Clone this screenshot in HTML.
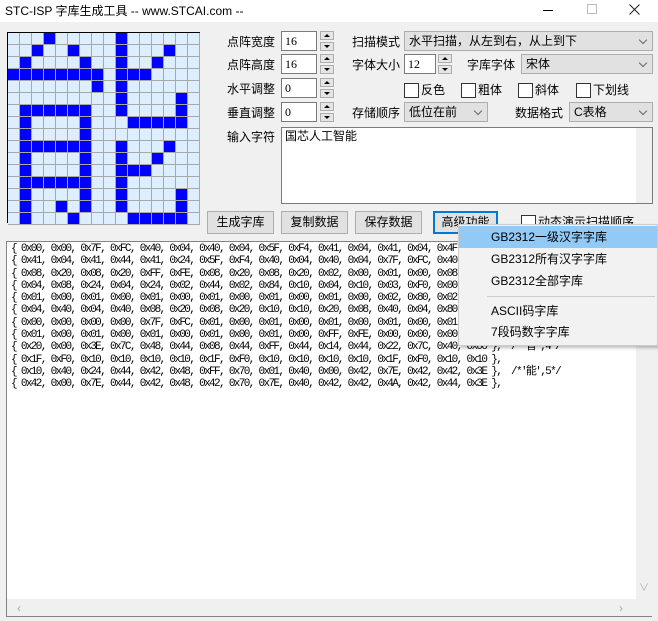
<!DOCTYPE html>
<html><head><meta charset="utf-8"><style>
*{box-sizing:border-box;margin:0;padding:0}
body{width:658px;height:621px;background:#f0f0f0;position:relative;overflow:hidden;font-family:"Liberation Sans","Noto Sans CJK SC",sans-serif;font-size:12px;color:#000}
.a{position:absolute}
.lbl{position:absolute;font-size:12px;line-height:14px;white-space:nowrap}
.inp{position:absolute;background:#fff;border:1px solid #7a7a7a;font-family:"Liberation Serif","Noto Serif CJK SC",serif;font-size:12px;padding:2px 3px;height:20px}
.spin{position:absolute;width:14px;height:20px}
.spin div{height:9px;border:1px solid #adadad;background:#e5e5e5;margin-bottom:2px;position:relative}
.spin div:after{content:"";position:absolute;left:3px;border-left:3px solid transparent;border-right:3px solid transparent}
.spin .u:after{top:2px;border-bottom:3px solid #000}
.spin .d:after{top:2px;border-top:3px solid #000}
.sel{position:absolute;height:20px;background:#e1e1e1;border:1px solid #adadad;padding:2px 4px;font-size:12px;line-height:14px;white-space:nowrap}
.sel:after{content:"";position:absolute;right:6px;top:5px;width:5px;height:5px;border-right:1px solid #666;border-bottom:1px solid #666;transform:rotate(45deg)}
.cb{position:absolute;font-size:12px;line-height:14px;white-space:nowrap;padding-left:17px}
.cb:before{content:"";position:absolute;left:0;top:0;width:13px;height:13px;border:1px solid #333;background:#fff}
.btn{position:absolute;height:23px;background:#e1e1e1;border:1px solid #adadad;text-align:center;line-height:21px;font-size:12px}
#grid{position:absolute;left:7px;top:32px;width:193px;height:191px;border:1px solid #000;background:#d4e8fb;display:grid;grid-template-columns:repeat(16,12px);grid-template-rows:repeat(16,12px);gap:0}
#grid div{border-right:1px solid #a8a8a8;border-bottom:1px solid #a8a8a8;background:#ddeeff}
#grid div.on{background:#0000ff}
#code{position:absolute;left:6px;top:241px;width:646px;height:376px;border:1px solid #828282;background:#fff}
pre{position:absolute;left:4px;top:1px;font-family:"Liberation Mono",monospace;font-size:11px;letter-spacing:-1.65px;line-height:12.3px;color:#000}
.menu{position:absolute;left:458px;top:224px;width:200px;height:122px;background:#f2f2f2;border:1px solid #ccc;box-shadow:2px 2px 3px rgba(0,0,0,.25)}
.mi{position:absolute;left:0;width:198px;height:22px;line-height:22px;padding-left:32px;font-size:12px;color:#000}
</style></head><body>
<div class="a" style="left:0;top:0;width:658px;height:22px;background:#fff"></div>
<div class="lbl" style="left:5px;top:3px;font-size:12px;line-height:16px">STC-ISP 字库生成工具 -- www.STCAI.com --</div>
<div class="a" style="left:543px;top:10px;width:10px;height:1px;background:#000"></div>
<div class="a" style="left:587px;top:4px;width:10px;height:10px;border:1px solid #bbb"></div>
<svg class="a" style="left:629px;top:4px" width="11" height="11"><path d="M0.5 0.5L10.5 10.5M10.5 0.5L0.5 10.5" stroke="#222" stroke-width="1"/></svg>

<div id="grid"></div>

<div class="lbl" style="left:227px;top:35px">点阵宽度</div>
<div class="inp" style="left:281px;top:31px;width:36px">16</div>
<div class="spin" style="left:320px;top:31px"><div class="u"></div><div class="d"></div></div>
<div class="lbl" style="left:227px;top:58px">点阵高度</div>
<div class="inp" style="left:281px;top:54px;width:36px">16</div>
<div class="spin" style="left:320px;top:54px"><div class="u"></div><div class="d"></div></div>
<div class="lbl" style="left:227px;top:82px">水平调整</div>
<div class="inp" style="left:281px;top:78px;width:36px">0</div>
<div class="spin" style="left:320px;top:78px"><div class="u"></div><div class="d"></div></div>
<div class="lbl" style="left:227px;top:106px">垂直调整</div>
<div class="inp" style="left:281px;top:102px;width:36px">0</div>
<div class="spin" style="left:320px;top:102px"><div class="u"></div><div class="d"></div></div>

<div class="lbl" style="left:352px;top:35px">扫描模式</div>
<div class="sel" style="left:404px;top:31px;width:249px">水平扫描，从左到右，从上到下</div>
<div class="lbl" style="left:352px;top:58px">字体大小</div>
<div class="inp" style="left:404px;top:54px;width:32px">12</div>
<div class="spin" style="left:438px;top:54px"><div class="u"></div><div class="d"></div></div>
<div class="lbl" style="left:467px;top:58px">字库字体</div>
<div class="sel" style="left:521px;top:54px;width:132px">宋体</div>
<div class="cb" style="left:404px;top:83px">反色</div>
<div class="cb" style="left:461px;top:83px">粗体</div>
<div class="cb" style="left:518px;top:83px">斜体</div>
<div class="cb" style="left:576px;top:83px">下划线</div>
<div class="lbl" style="left:352px;top:106px">存储顺序</div>
<div class="sel" style="left:404px;top:102px;width:84px">低位在前</div>
<div class="lbl" style="left:515px;top:106px">数据格式</div>
<div class="sel" style="left:569px;top:102px;width:84px">C表格</div>
<div class="lbl" style="left:227px;top:130px">输入字符</div>
<div class="a" style="left:281px;top:127px;width:372px;height:77px;background:#fff;border:1px solid #7a7a7a"></div>
<div class="lbl" style="left:285px;top:129px">国芯人工智能</div>
<div class="a" style="left:636px;top:128px;width:16px;height:75px;background:#f0f0f0"></div>

<div class="btn" style="left:207px;top:211px;width:67px">生成字库</div>
<div class="btn" style="left:281px;top:211px;width:67px">复制数据</div>
<div class="btn" style="left:355px;top:211px;width:67px">保存数据</div>
<div class="btn" style="left:433px;top:211px;width:65px;border:2px solid #0078d7;line-height:19px">高级功能</div>
<div class="cb" style="left:521px;top:215px">动态演示扫描顺序</div>

<div id="code">
<pre>{ 0x00, 0x00, 0x7F, 0xFC, 0x40, 0x04, 0x40, 0x04, 0x5F, 0xF4, 0x41, 0x04, 0x41, 0x04, 0x4F, 0xE4 },
{ 0x41, 0x04, 0x41, 0x44, 0x41, 0x24, 0x5F, 0xF4, 0x40, 0x04, 0x40, 0x04, 0x7F, 0xFC, 0x40, 0x04 },
{ 0x08, 0x20, 0x08, 0x20, 0xFF, 0xFE, 0x08, 0x20, 0x08, 0x20, 0x02, 0x00, 0x01, 0x00, 0x08, 0x88 },
{ 0x04, 0x08, 0x24, 0x04, 0x24, 0x02, 0x44, 0x02, 0x84, 0x10, 0x04, 0x10, 0x03, 0xF0, 0x00, 0x00 },
{ 0x01, 0x00, 0x01, 0x00, 0x01, 0x00, 0x01, 0x00, 0x01, 0x00, 0x01, 0x00, 0x02, 0x80, 0x02, 0x80 },
{ 0x04, 0x40, 0x04, 0x40, 0x08, 0x20, 0x08, 0x20, 0x10, 0x10, 0x20, 0x08, 0x40, 0x04, 0x80, 0x02 },
{ 0x00, 0x00, 0x00, 0x00, 0x7F, 0xFC, 0x01, 0x00, 0x01, 0x00, 0x01, 0x00, 0x01, 0x00, 0x01, 0x00 },
{ 0x01, 0x00, 0x01, 0x00, 0x01, 0x00, 0x01, 0x00, 0x01, 0x00, 0xFF, 0xFE, 0x00, 0x00, 0x00, 0x00 },
{ 0x20, 0x00, 0x3E, 0x7C, 0x48, 0x44, 0x08, 0x44, 0xFF, 0x44, 0x14, 0x44, 0x22, 0x7C, 0x40, 0x00 },  /*'智',4*/
{ 0x1F, 0xF0, 0x10, 0x10, 0x10, 0x10, 0x1F, 0xF0, 0x10, 0x10, 0x10, 0x10, 0x1F, 0xF0, 0x10, 0x10 },
{ 0x10, 0x40, 0x24, 0x44, 0x42, 0x48, 0xFF, 0x70, 0x01, 0x40, 0x00, 0x42, 0x7E, 0x42, 0x42, 0x3E },  /*'能',5*/
{ 0x42, 0x00, 0x7E, 0x44, 0x42, 0x48, 0x42, 0x70, 0x7E, 0x40, 0x42, 0x42, 0x4A, 0x42, 0x44, 0x3E },</pre>
<div class="a" style="left:629px;top:0;width:16px;height:357px;background:#f0f0f0"></div>
<div class="a" style="left:0;top:357px;width:645px;height:17px;background:#f0f0f0"></div>
<div class="lbl" style="left:632px;top:340px;color:#aaa;font-size:10px">∨</div>
<div class="lbl" style="left:10px;top:359px;color:#aaa;font-size:12px">‹</div>
<div class="lbl" style="left:612px;top:359px;color:#aaa;font-size:12px">›</div>
</div>

<div class="menu">
<div class="mi" style="top:1px;background:#91c9f7">GB2312一级汉字字库</div>
<div class="mi" style="top:23px">GB2312所有汉字字库</div>
<div class="mi" style="top:45px">GB2312全部字库</div>
<div class="a" style="left:28px;top:71px;width:168px;height:1px;background:#ccc"></div>
<div class="mi" style="top:75px">ASCII码字库</div>
<div class="mi" style="top:96px">7段码数字字库</div>
</div>

<script>
var rows={0:[3,9],1:[2,5,9,13],2:[1,6,9,12],3:[0,1,2,3,4,5,6,7,9,10,11],4:[7,9],5:[9,14],6:[1,2,3,4,5,6,9,14],7:[1,6,10,11,12,13,14],8:[1,6],9:[1,2,3,4,5,6,9,13],10:[1,6,9,12],11:[1,6,9,10,11],12:[1,2,3,4,5,6,9],13:[1,6,9,14],14:[1,4,6,9,14],15:[1,5,10,11,12,13,14]};
var g=document.getElementById('grid'),h='';
for(var r=0;r<16;r++)for(var c=0;c<16;c++)h+='<div'+(rows[r].indexOf(c)>=0?' class="on"':'')+'></div>';
g.innerHTML=h;
</script>
</body></html>
